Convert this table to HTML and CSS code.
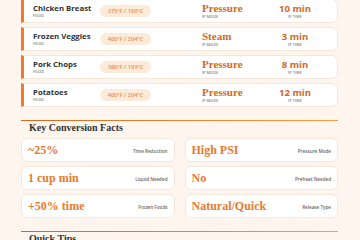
FILE: index.html
```html
<!DOCTYPE html>
<html lang="en">
<head>
<meta charset="utf-8">
<title>Instant Pot Conversion</title>
<link rel="stylesheet" href="styles.css">
</head>
<body>
<main class="page">
  <section class="rows">
    <div class="row">
      <div class="food"><div class="food-name">Chicken Breast</div><div class="tiny">FOOD</div></div>
      <div class="temp">375°F / 190°C</div>
      <div class="mode"><div class="mode-val">Pressure</div><div class="tiny">IP MODE</div></div>
      <div class="time"><div class="time-val">10 min</div><div class="tiny">IP TIME</div></div>
    </div>
    <div class="row">
      <div class="food"><div class="food-name">Frozen Veggies</div><div class="tiny">FOOD</div></div>
      <div class="temp">400°F / 204°C</div>
      <div class="mode"><div class="mode-val">Steam</div><div class="tiny">IP MODE</div></div>
      <div class="time"><div class="time-val">3 min</div><div class="tiny">IP TIME</div></div>
    </div>
    <div class="row">
      <div class="food"><div class="food-name">Pork Chops</div><div class="tiny">FOOD</div></div>
      <div class="temp">380°F / 193°C</div>
      <div class="mode"><div class="mode-val">Pressure</div><div class="tiny">IP MODE</div></div>
      <div class="time"><div class="time-val">8 min</div><div class="tiny">IP TIME</div></div>
    </div>
    <div class="row">
      <div class="food"><div class="food-name">Potatoes</div><div class="tiny">FOOD</div></div>
      <div class="temp">400°F / 204°C</div>
      <div class="mode"><div class="mode-val">Pressure</div><div class="tiny">IP MODE</div></div>
      <div class="time"><div class="time-val">12 min</div><div class="tiny">IP TIME</div></div>
    </div>
  </section>

  <section class="section">
    <h2 class="section-title">Key Conversion Facts</h2>
    <div class="facts">
      <div class="fact"><span class="fact-val">~25%</span><span class="fact-label">Time Reduction</span></div>
      <div class="fact"><span class="fact-val">High PSI</span><span class="fact-label">Pressure Mode</span></div>
      <div class="fact"><span class="fact-val">1 cup min</span><span class="fact-label">Liquid Needed</span></div>
      <div class="fact"><span class="fact-val">No</span><span class="fact-label">Preheat Needed</span></div>
      <div class="fact"><span class="fact-val">+50% time</span><span class="fact-label">Frozen Foods</span></div>
      <div class="fact"><span class="fact-val">Natural/Quick</span><span class="fact-label">Release Type</span></div>
    </div>
  </section>

  <section class="section">
    <h2 class="section-title">Quick Tips</h2>
  </section>
</main>
</body>
</html>
```

FILE: styles.css
```css
html, body {
  margin: 0;
  padding: 0;
  background: #fdf5ee;
}
body {
  font-family: "Open Sans", "Liberation Sans", sans-serif;
  color: #333;
}
.page {
  width: 317px;
  margin: -1px 0 0 21px;
}
.rows {
  display: flex;
  flex-direction: column;
  gap: 4px;
}
.row {
  box-sizing: border-box;
  height: 24px;
  display: grid;
  grid-template-columns: 67px 102px 60px 66px;
  align-items: center;
  background: #fff;
  border: 1px solid #f6e7db;
  border-left: 3px solid #f07a2d;
  border-radius: 0 6px 6px 0;
  padding-left: 9px;
}
.food-name {
  font-size: 7.8px;
  font-weight: 700;
  color: #333;
  line-height: 9px;
  white-space: nowrap;
}
.tiny {
  font-size: 3.6px;
  font-weight: 600;
  color: #777;
  letter-spacing: 0.2px;
  line-height: 6px;
  white-space: nowrap;
}
.temp {
  justify-self: start;
  box-sizing: border-box;
  width: 51px;
  height: 12px;
  line-height: 12px;
  border-radius: 6px;
  background: #fdebd9;
  color: #ee8a4c;
  font-size: 5.6px;
  font-weight: 600;
  text-align: center;
  white-space: nowrap;
}
.mode-val {
  font-family: "Liberation Serif", "DejaVu Serif", serif;
  font-weight: 700;
  font-size: 11px;
  line-height: 11px;
  color: #d2691e;
}
.time { text-align: center; }
.time-val {
  font-weight: 700;
  font-size: 9.5px;
  line-height: 11px;
  color: #d2691e;
}
.section {
  margin-top: 13px;
  border-top: 1px solid #e8863a;
  border-image: linear-gradient(90deg, #d2691e, #f5a33a) 1;
}
.section-title {
  margin: 0;
  padding: 1px 0 0 8px;
  font-family: "Liberation Serif", "DejaVu Serif", serif;
  font-size: 10px;
  line-height: 12px;
  font-weight: 700;
  color: #333;
}
.facts {
  margin-top: 4px;
  display: grid;
  grid-template-columns: 1fr 1fr;
  column-gap: 10px;
  row-gap: 4px;
}
.fact {
  box-sizing: border-box;
  height: 24px;
  display: flex;
  align-items: center;
  justify-content: space-between;
  background: #fff;
  border: 1px solid #f6e7db;
  border-radius: 6px;
  padding: 0 6px 0 6px;
}
.fact-val {
  font-family: "Liberation Serif", "DejaVu Serif", serif;
  font-weight: 700;
  font-size: 12px;
  color: #ea7a2e;
}
.fact-label {
  font-size: 4.6px;
  font-weight: 600;
  color: #666;
  margin-top: 2px;
}
```
